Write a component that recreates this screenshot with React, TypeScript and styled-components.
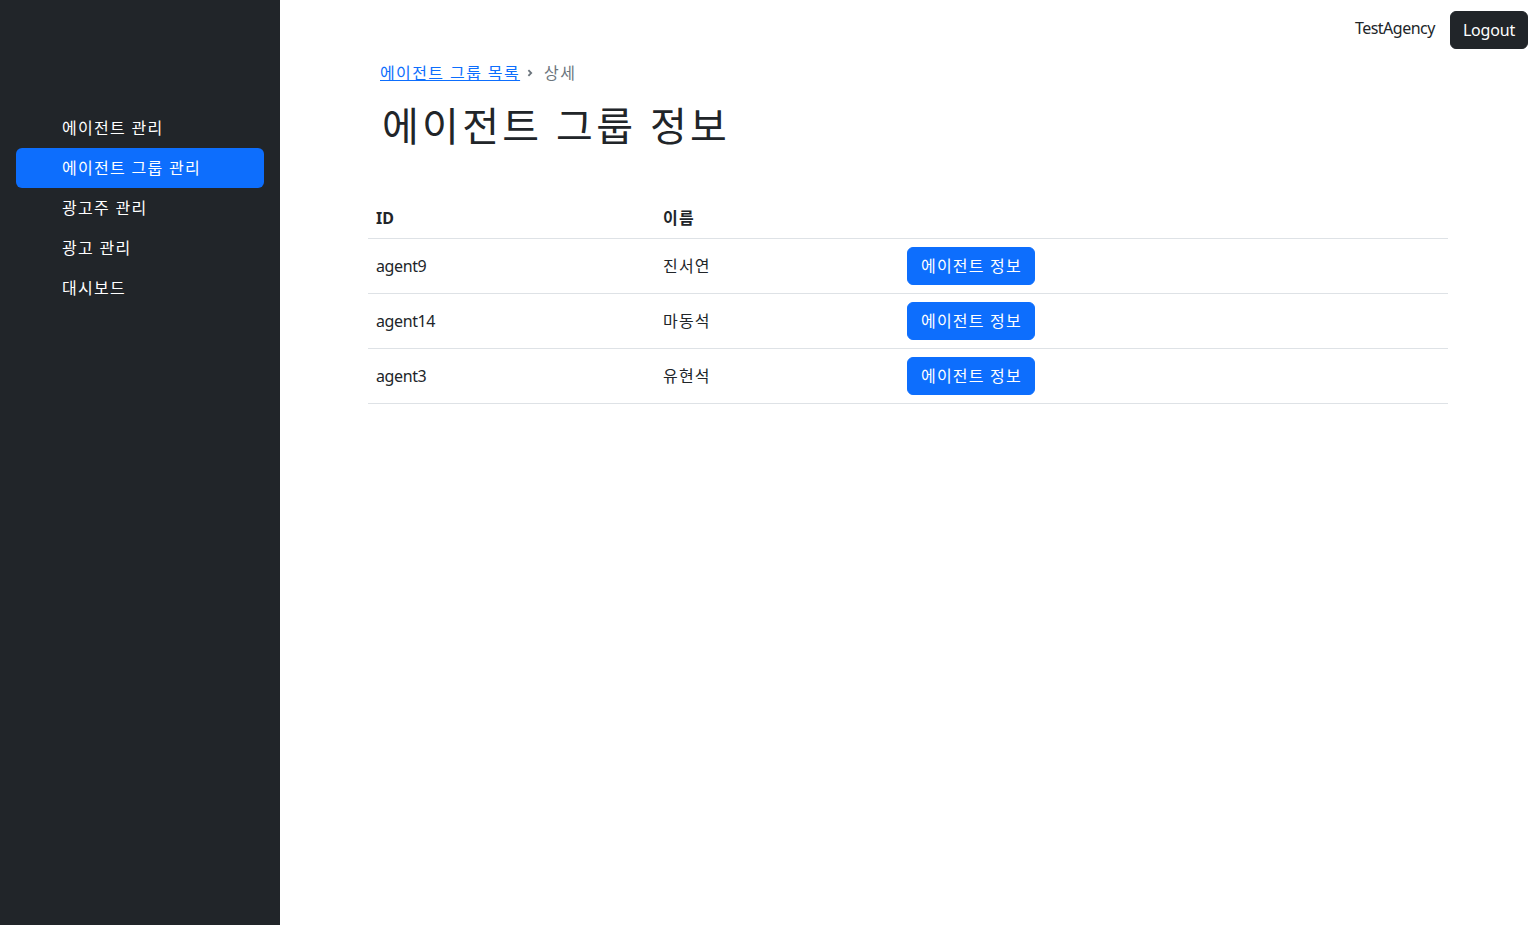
import React from 'react';
import styled, { createGlobalStyle } from 'styled-components';

const GlobalStyle = createGlobalStyle`
  * { box-sizing: border-box; }
  body {
    margin: 0;
    font-family: "Noto Sans", "Noto Sans CJK KR", sans-serif;
    font-size: 16px;
    line-height: 1.5;
    color: #212529;
    background: #fff;
  }
`;

const menu = ['에이전트 관리', '에이전트 그룹 관리', '광고주 관리', '광고 관리', '대시보드'];

const agents = [
  { id: 'agent9', name: '진서연' },
  { id: 'agent14', name: '마동석' },
  { id: 'agent3', name: '유현석' },
];

const App = () => {
  return (
    <>
      <GlobalStyle />
      <Layout>
        <Sidebar>
          <NavList>
            {menu.map((item) => (
              <NavItem key={item} $active={item === '에이전트 그룹 관리'}>
                {item}
              </NavItem>
            ))}
          </NavList>
        </Sidebar>

        <Main>
          <TopBar>
            <UserName>TestAgency</UserName>
            <DarkButton>Logout</DarkButton>
          </TopBar>

          <Container>
            <PageHead>
              <Breadcrumb>
                <CrumbLink href="#">에이전트 그룹 목록</CrumbLink>
                <Separator>
                  <svg width="8" height="8" viewBox="0 0 8 8">
                    <path d="M2.4 1.2 L5.2 4 L2.4 6.8" fill="none" stroke="#6c757d" strokeWidth="1.8" />
                  </svg>
                </Separator>
                <CrumbCurrent>상세</CrumbCurrent>
              </Breadcrumb>
              <Title>에이전트 그룹 정보</Title>
            </PageHead>

            <Table>
              <thead>
                <tr>
                  <Th $w={287}>ID</Th>
                  <Th $w={244} $ko>이름</Th>
                  <Th />
                </tr>
              </thead>
              <tbody>
                {agents.map((a) => (
                  <tr key={a.id}>
                    <Td>{a.id}</Td>
                    <Td $ko>{a.name}</Td>
                    <Td>
                      <PrimaryButton>에이전트 정보</PrimaryButton>
                    </Td>
                  </tr>
                ))}
              </tbody>
            </Table>
          </Container>
        </Main>
      </Layout>
    </>
  );
};

const Layout = styled.div`
  display: flex;
  min-height: 925px;
`;

const Sidebar = styled.aside`
  width: 280px;
  flex-shrink: 0;
  background: #212529;
  padding: 108px 16px 16px;
`;

const NavList = styled.nav`
  display: flex;
  flex-direction: column;
`;

const NavItem = styled.a<{ $active?: boolean }>`
  display: block;
  height: 40px;
  padding: 8px 46px;
  border-radius: 6px;
  color: #fff;
  font-size: 16px;
  line-height: 24px;
  letter-spacing: 1.3px;
  text-decoration: none;
  cursor: pointer;
  background: ${({ $active }) => ($active ? '#0d6efd' : 'transparent')};
`;

const Main = styled.main`
  flex: 1;
  display: flex;
  flex-direction: column;
`;

const TopBar = styled.header`
  display: flex;
  justify-content: flex-end;
  align-items: center;
  gap: 15px;
  padding: 11px 8px 12px;
`;

const UserName = styled.span`
  font-size: 16px;
  letter-spacing: -0.5px;
  color: #212529;
  margin-top: -4px;
`;

const DarkButton = styled.button`
  font-family: inherit;
  font-size: 16px;
  line-height: 24px;
  letter-spacing: -0.2px;
  padding: 6px 12px;
  border: 1px solid #212529;
  border-radius: 6px;
  background: #212529;
  color: #fff;
  cursor: pointer;
`;

const Container = styled.div`
  width: 1080px;
  margin: 0 auto;
`;

const PageHead = styled.div`
  padding: 0 12px;
  margin-bottom: 48px;
`;

const Breadcrumb = styled.div`
  display: flex;
  align-items: center;
  height: 24px;
  margin-bottom: 17px;
  letter-spacing: 1.4px;
`;

const CrumbLink = styled.a`
  color: #0d6efd;
  text-decoration: underline;
`;

const Separator = styled.span`
  display: inline-flex;
  align-items: center;
  padding: 0 10px 0 6px;
`;

const CrumbCurrent = styled.span`
  color: #6c757d;
`;

const Title = styled.h1`
  margin: 0 0 0 2px;
  font-size: 40px;
  font-weight: 400;
  line-height: 1.2;
  letter-spacing: 3.3px;
`;

const Table = styled.table`
  width: 100%;
  border-collapse: collapse;
`;

const Th = styled.th<{ $w?: number; $ko?: boolean }>`
  width: ${({ $w }) => ($w ? `${$w}px` : 'auto')};
  text-align: left;
  font-weight: 700;
  padding: 8px;
  letter-spacing: ${({ $ko }) => ($ko ? '1.2px' : '0')};
  border-bottom: 1px solid #dee2e6;
`;

const Td = styled.td<{ $ko?: boolean }>`
  padding: 8px;
  border-bottom: 1px solid #dee2e6;
  vertical-align: middle;
  letter-spacing: ${({ $ko }) => ($ko ? '1.2px' : '-0.4px')};
`;

const PrimaryButton = styled.button`
  font-family: inherit;
  font-size: 16px;
  line-height: 24px;
  letter-spacing: 1.2px;
  padding: 6px 12px 6px 13px;
  border: 1px solid #0d6efd;
  border-radius: 6px;
  background: #0d6efd;
  color: #fff;
  cursor: pointer;
`;

export default App;
